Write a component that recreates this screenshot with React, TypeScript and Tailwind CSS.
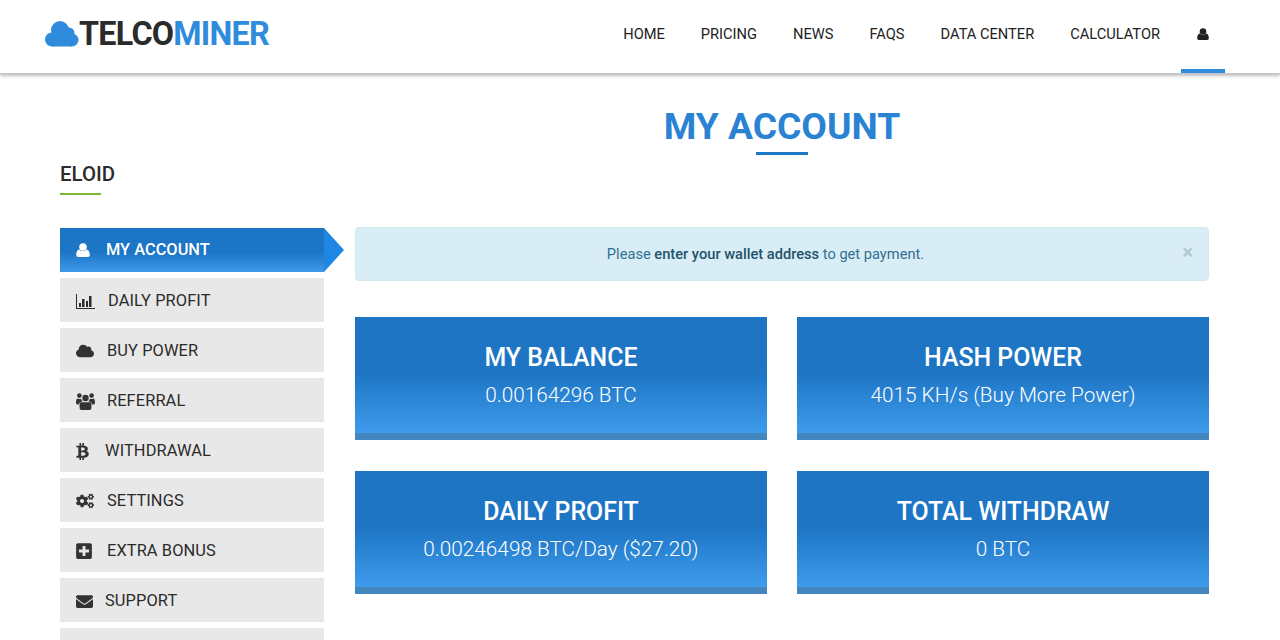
import React from "react";
import { FaCloud, FaBtc, FaCogs, FaPlusSquare, FaEnvelope } from "react-icons/fa";

function UserIcon({ w, color }: { w: number; color: string }) {
  return (
    <svg width={w} height={w} viewBox="0 0 14 14" fill={color}>
      <circle cx="7" cy="4" r="3.8" />
      <path d="M0.2 12 C0.2 9 1.2 6.6 3.4 6.4 C4.4 7.4 5.6 7.9 7 7.9 C8.4 7.9 9.6 7.4 10.6 6.4 C12.8 6.6 13.8 9 13.8 12 C13.8 13.3 12.9 14 11.8 14 L2.2 14 C1.1 14 0.2 13.3 0.2 12 Z" />
    </svg>
  );
}

function UsersIcon() {
  return (
    <svg width="19" height="17" viewBox="0 0 19 17" fill="#333333">
      <circle cx="9.5" cy="5" r="3.2" />
      <circle cx="3.4" cy="2.6" r="2.3" />
      <circle cx="15.6" cy="2.6" r="2.3" />
      <path d="M5 9.2 H14 C15 9.2 15.4 10.4 15.4 12 V15 C15.4 16.2 14.6 17 13.6 17 H5.4 C4.4 17 3.6 16.2 3.6 15 V12 C3.6 10.4 4 9.2 5 9.2 Z" />
      <path d="M0 9.5 C0 7 0.6 5.6 1.6 5.4 C2.4 6 4 6.2 5 5.8 C5.4 7 6 7.8 6.6 8.4 C4.4 8.4 3 10 2.9 11.4 H1.2 C0.4 11.4 0 10.6 0 9.5 Z" />
      <path d="M19 9.5 C19 7 18.4 5.6 17.4 5.4 C16.6 6 15 6.2 14 5.8 C13.6 7 13 7.8 12.4 8.4 C14.6 8.4 16 10 16.1 11.4 H17.8 C18.6 11.4 19 10.6 19 9.5 Z" />
    </svg>
  );
}

function ChartIcon() {
  return (
    <svg width="19" height="15" viewBox="0 0 19 15" fill="#2b2b2b">
      <rect x="0" y="0" width="1" height="15" />
      <rect x="0" y="14" width="19" height="1" />
      <rect x="3" y="9" width="2" height="4" />
      <rect x="6" y="5" width="2.5" height="8" />
      <rect x="10" y="7" width="2" height="6" />
      <rect x="13" y="2" width="2.5" height="11" />
    </svg>
  );
}

function LogoCloud() {
  return (
    <svg width="34" height="26" viewBox="0 0 34 26" fill="#2f8bdc">
      <circle cx="7" cy="18.5" r="7" />
      <circle cx="15" cy="9" r="9" />
      <circle cx="24" cy="12" r="5.5" />
      <circle cx="27" cy="19" r="6.5" />
      <rect x="7" y="14" width="20" height="11.5" />
    </svg>
  );
}

const items = [
  { label: "DAILY PROFIT", icon: <ChartIcon />, iw: "w-[32px]" },
  { label: "BUY POWER", icon: <FaCloud size={18} />, iw: "w-[31px]" },
  { label: "REFERRAL", icon: <UsersIcon />, iw: "w-[31px]" },
  { label: "WITHDRAWAL", icon: <FaBtc size={17} className="-ml-[2px]" />, iw: "w-[29px]" },
  { label: "SETTINGS", icon: <FaCogs size={18} />, iw: "w-[31px]" },
  { label: "EXTRA BONUS", icon: <FaPlusSquare size={18} className="-ml-[1px]" />, iw: "w-[31px]" },
  { label: "SUPPORT", icon: <FaEnvelope size={17} />, iw: "w-[29px]" },
];

const cards = [
  { title: "MY BALANCE", value: "0.00164296 BTC" },
  { title: "HASH POWER", value: "4015 KH/s (Buy More Power)" },
  { title: "DAILY PROFIT", value: "0.00246498 BTC/Day ($27.20)" },
  { title: "TOTAL WITHDRAW", value: "0 BTC" },
];

const nav = ["HOME", "PRICING", "NEWS", "FAQS", "DATA CENTER", "CALCULATOR"];

export default function App() {
  return (
    <div className="h-[640px] overflow-hidden bg-white font-['Roboto',sans-serif] text-[#222222]">
      <header className="relative z-10 flex h-[74px] items-center justify-between border-b border-[#c4c4c4] bg-white pl-[45px] pr-[55px] shadow-[0_2px_3px_rgba(0,0,0,0.25)]">
        <div className="mb-[5px] flex items-center">
          <LogoCloud />
          <span className="text-[32.3px] font-bold leading-none tracking-[-0.75px] text-[#2b2b2b]">
            TELCO<span className="text-[#2f8bdc]">MINER</span>
          </span>
        </div>
        <nav className="flex h-full items-center text-[14.65px] font-normal text-[#222222]">
          {nav.map((n) => (
            <a key={n} className="mb-[3px] mr-[36px]">{n}</a>
          ))}
          <a className="-ml-[15px] flex h-full w-[44px] items-center justify-center border-b-[4px] border-[#2f8bdc] pb-[1px]">
            <UserIcon w={12} color="#222222" />
          </a>
        </nav>
      </header>

      <div className="flex pl-[60px] pr-[71px]">
        <aside className="w-[264px] shrink-0 pt-[89px]">
          <h2 className="text-[20.4px] font-medium leading-[22px] text-[#2b2b2b]">ELOID</h2>
          <div className="mt-[8px] h-[2px] w-[41px] bg-[#7cb82f]" />
          <ul className="mt-[33px] flex flex-col gap-[6px] text-[16.4px] font-normal">
            <li className="relative flex h-[44px] items-center bg-[linear-gradient(180deg,#1c75c5_0%,#1c75c5_55%,#3f99ea_100%)] pl-[16px] font-medium text-white">
              <span className="flex w-[30px]"><UserIcon w={14} color="#ffffff" /></span>
              MY ACCOUNT
              <span className="absolute left-[264px] top-0 h-0 w-0 border-y-[22px] border-l-[20px] border-y-transparent border-l-[#1f86e4]" />
            </li>
            {items.map((it) => (
              <li key={it.label} className="flex h-[44px] items-center bg-[#e8e8e8] pl-[16px] pt-[2px] tracking-[0.1px] text-[#2b2b2b]">
                <span className={`flex ${it.iw} text-[#333333]`}>{it.icon}</span>
                {it.label}
              </li>
            ))}
            <li className="h-[44px] bg-[#e8e8e8]" />
          </ul>
        </aside>

        <main className="ml-[31px] flex-1 pt-[31px]">
          <div className="flex flex-col items-center">
            <h1 className="text-[37.2px] font-bold leading-[42px] text-[#2a83d2]">MY ACCOUNT</h1>
            <div className="mt-[5px] h-[3px] w-[52px] bg-[#1f77c7]" />
          </div>
          <div className="relative mt-[72px] flex h-[54px] items-center justify-center rounded-[4px] border border-[#d0e8ee] bg-[#d9edf7] pt-[1px] text-[14.65px] text-[#31708f]">
            <span className="ml-[-33px]">Please <b className="font-medium text-[#245269]">enter your wallet address</b> to get payment.</span>
            <span className="absolute right-[15px] top-[14px] text-[20px] font-bold leading-[20px] text-[#b0c8d4]">×</span>
          </div>
          <div className="mt-[36px] grid grid-cols-2 gap-x-[30px] gap-y-[31px]">
            {cards.map((c) => (
              <div key={c.title} className="flex h-[123px] flex-col items-center border-b-[7px] border-[#4487be] bg-[linear-gradient(180deg,#1d75c4_0%,#1d75c4_48%,#3f9bec_100%)] pt-[25px] text-white">
                <div className="text-[24.9px] font-medium leading-[32px]">{c.title}</div>
                <div className="mt-[7px] text-[20.75px] font-light leading-[28px]">{c.value}</div>
              </div>
            ))}
          </div>
        </main>
      </div>
    </div>
  );
}
